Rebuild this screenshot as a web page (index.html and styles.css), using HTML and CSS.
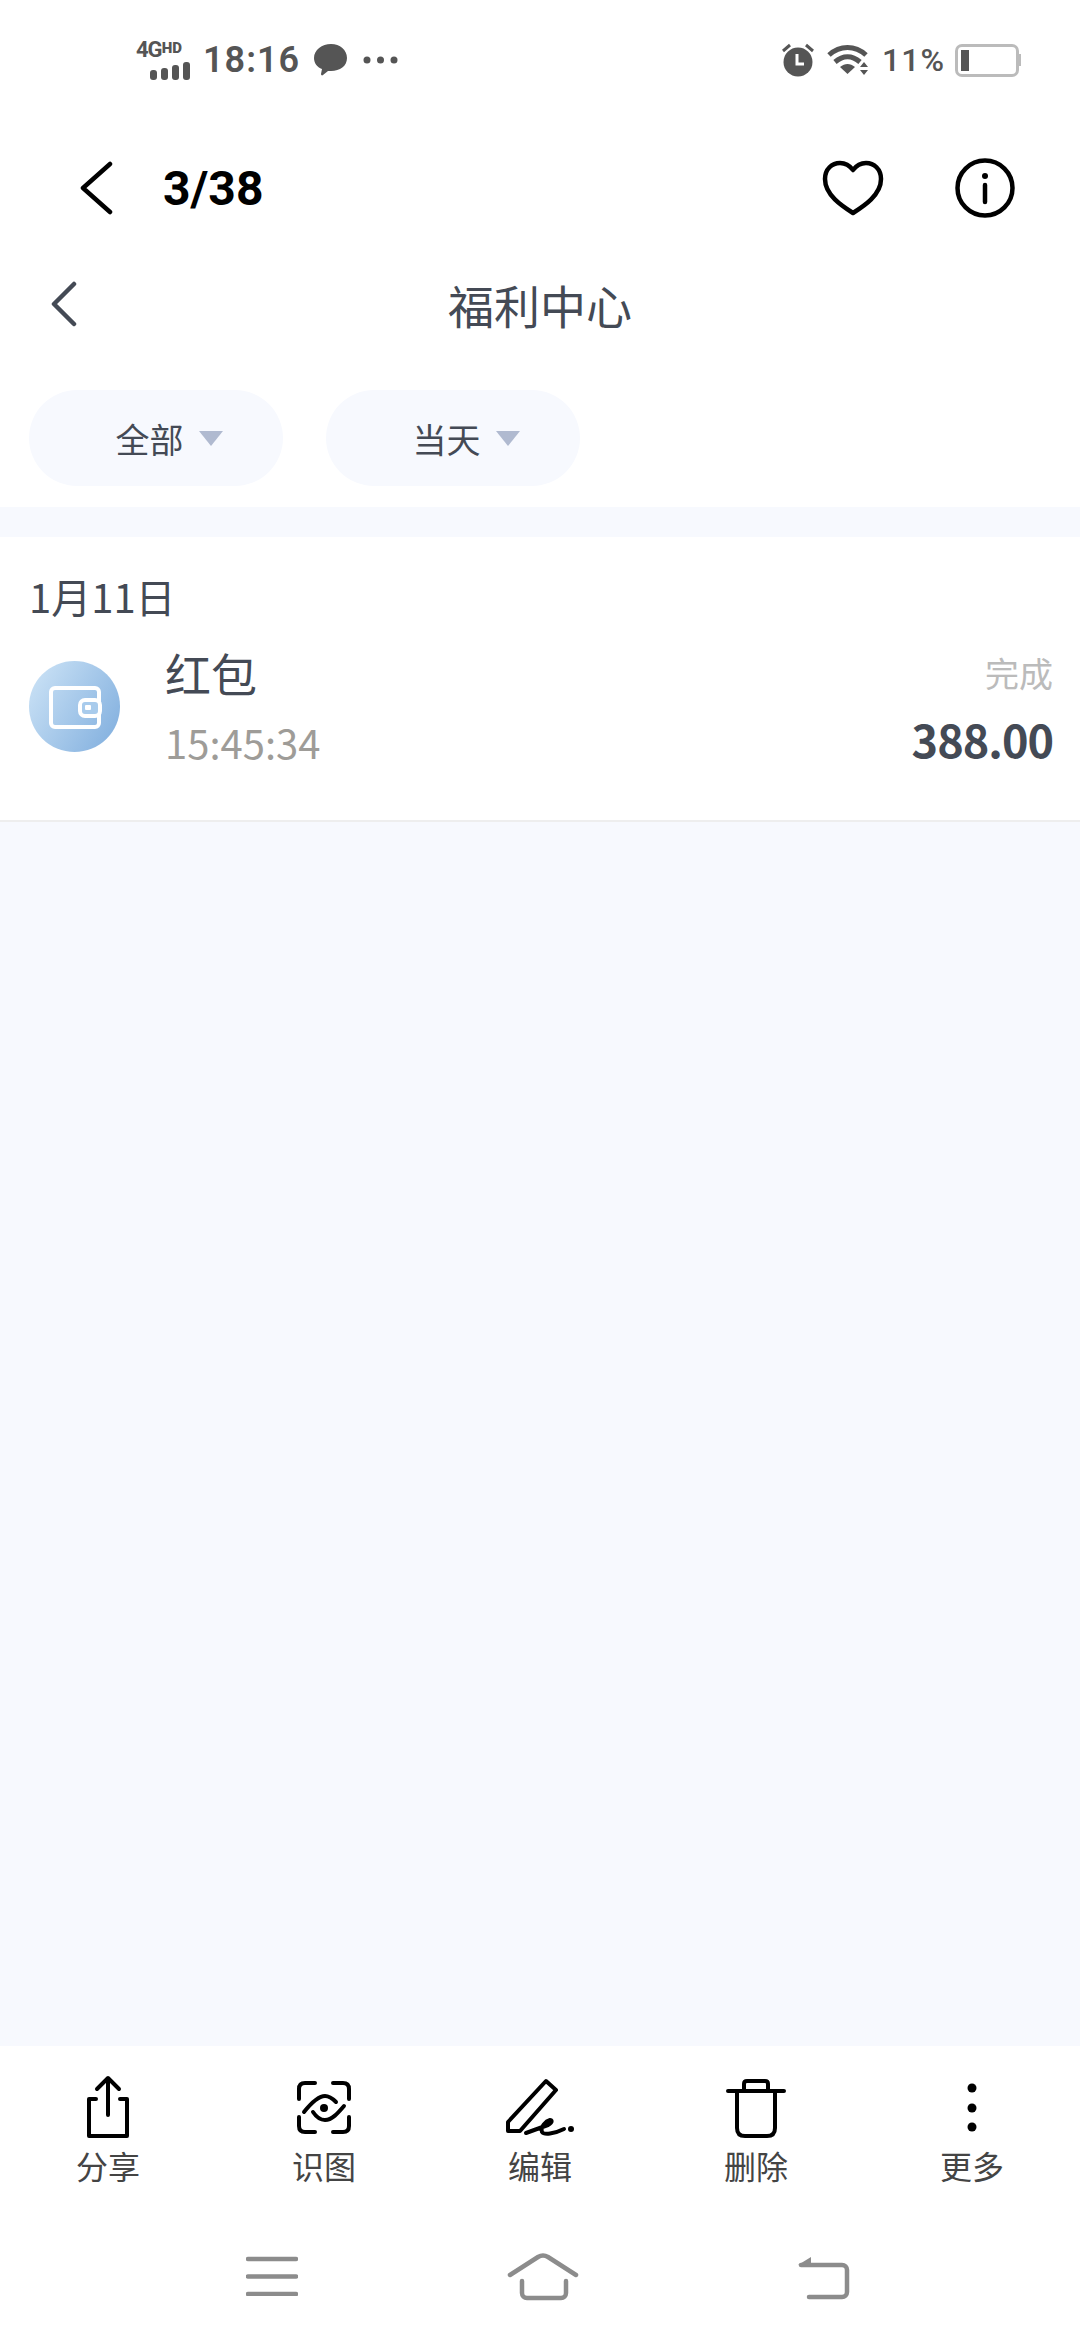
FILE: index.html
```html
<!DOCTYPE html>
<html lang="zh-CN">

<head>
    <meta charset="UTF-8">
    <meta name="viewport" content="width=device-width, initial-scale=1.0">
    <title>福利中心</title>
    <link rel="stylesheet" href="styles.css">
</head>

<body>
    <div class="page">
        <div class="status">
            <div class="status-left">
                <div class="net">
                    <div class="net-text"><span class="net-4g">4G</span><span class="net-hd">HD</span></div>
                    <svg class="net-bars" width="42" height="18" viewBox="0 0 42 18">
                        <rect x="1" y="8" width="7" height="10" rx="3" />
                        <rect x="12" y="6" width="7" height="12" rx="3" />
                        <rect x="23" y="3" width="7" height="15" rx="3" />
                        <rect x="34" y="0" width="7" height="18" rx="3" />
                    </svg>
                </div>
                <span class="clock">18:16</span>
                <svg class="bubble" width="34" height="32" viewBox="0 0 34 32">
                    <path d="M17 0C26 0 33 6 33 14C33 22 26 27 17 27C16 27 15 27 14 27L9 31C8 32 7 31 7 30L8 25C3 23 0 19 0 14C0 6 8 0 17 0Z" />
                </svg>
                <svg class="more-dots" width="35" height="8" viewBox="0 0 35 8">
                    <circle cx="4" cy="4" r="3.500" />
                    <circle cx="17.500" cy="4" r="3.500" />
                    <circle cx="31" cy="4" r="3.500" />
                </svg>
            </div>
            <div class="status-right">
                <svg class="alarm" width="34" height="34" viewBox="0 0 34 34">
                    <circle cx="17" cy="19" r="14.500" />
                    <path class="alarm-ear" d="M2 8L9 2M32 8L25 2" />
                    <path class="alarm-hand" d="M16 11V21H23" />
                </svg>
                <svg class="wifi" width="44" height="32" viewBox="0 0 44 32">
                    <path class="wifi-arc" d="M2 11C13 1 28 1 39 11M8 18C16 11 25 11 33 18" />
                    <path d="M13 23C18 19 23 19 28 23L20.500 30Z" />
                    <path d="M37 18L41 23H33ZM37 31L33 26H41Z" />
                </svg>
                <span class="battery-text">11%</span>
                <div class="battery">
                    <div class="battery-body">
                        <div class="battery-fill"></div>
                    </div>
                    <div class="battery-tip"></div>
                </div>
            </div>
        </div>

        <div class="viewer-bar">
            <svg class="viewer-back" width="34" height="54" viewBox="0 0 34 54">
                <path d="M31 3L4 27L31 51" />
            </svg>
            <span class="viewer-count">3/38</span>
            <svg class="viewer-heart" width="62" height="56" viewBox="0 0 62 56">
                <path d="M31 53C20 46 3 35 3 19C3 9 10 3 18 3C23 3 28 6 31 10C34 6 39 3 44 3C52 3 59 9 59 19C59 35 42 46 31 53Z" />
            </svg>
            <svg class="viewer-info" width="60" height="60" viewBox="0 0 60 60">
                <circle cx="30" cy="30" r="27.500" />
                <circle class="dot" cx="30" cy="18" r="3" />
                <path d="M30 27V44" />
            </svg>
        </div>

        <div class="title-bar">
            <svg class="title-back" width="28" height="46" viewBox="0 0 28 46">
                <path d="M24 3L4 23L24 43" />
            </svg>
            <span class="title">福利中心</span>
        </div>

        <div class="filters">
            <div class="chip"><span>全部</span><i class="caret"></i></div>
            <div class="chip"><span>当天</span><i class="caret"></i></div>
        </div>

        <div class="content">
            <div class="day">
                <div class="day-date">1月11日</div>
                <div class="record">
                    <svg class="record-icon" width="91" height="91" viewBox="0 0 91 91">
                        <defs>
                            <linearGradient id="coin" x1="0" y1="0" x2="1" y2="0.600">
                                <stop offset="0" stop-color="#cfe5f7" />
                                <stop offset="1" stop-color="#8ab5e1" />
                            </linearGradient>
                        </defs>
                        <circle cx="45.500" cy="45.500" r="45.500" fill="url(#coin)" />
                        <rect class="wallet" x="22" y="27" width="48" height="39" rx="4" />
                        <rect class="wallet clasp" x="51" y="39" width="20" height="16" rx="5" />
                        <rect class="wallet-dot" x="56" y="44" width="6" height="5" rx="1" />
                    </svg>
                    <div class="record-main">
                        <div class="record-name">红包</div>
                        <div class="record-time">15:45:34</div>
                    </div>
                    <div class="record-side">
                        <div class="record-state">完成</div>
                        <div class="record-amount">388.00</div>
                    </div>
                </div>
            </div>
        </div>

        <div class="tools">
            <div class="tool">
                <svg width="64" height="64" viewBox="0 0 64 64">
                    <path d="M20 24H13V61H51V24H44M32 40V4M21 14L32 3L43 14" />
                </svg>
                <span>分享</span>
            </div>
            <div class="tool">
                <svg width="64" height="64" viewBox="0 0 64 64">
                    <path d="M7 24V14Q7 8 13 8H23M41 8H51Q57 8 57 14V24M57 42V51Q57 57 51 57H41M23 57H13Q7 57 7 51V42" />
                    <path d="M12 37C20 27 27 21 33 21C38 21 41 24 44 27M21 37C25 43 29 45 33 45C40 45 46 38 52 31" />
                    <circle class="dot" cx="32" cy="33" r="4" />
                </svg>
                <span>识图</span>
            </div>
            <div class="tool">
                <svg width="72" height="64" viewBox="0 0 72 64">
                    <path d="M4 56V47L42 6L52 15L16 56Z" />
                    <path d="M22 58L44 50C49 47 48 45 46 45C42 46 36 52 38 57C40 60 50 59 60 54" />
                    <circle class="dot" cx="67" cy="54" r="3" />
                </svg>
                <span>编辑</span>
            </div>
            <div class="tool">
                <svg width="64" height="64" viewBox="0 0 64 64">
                    <path d="M4 16H60M20 16V9Q20 6 23 6H41Q44 6 44 9V16M13 16V53Q13 61 21 61H43Q51 61 51 53V16" />
                </svg>
                <span>删除</span>
            </div>
            <div class="tool">
                <svg width="64" height="64" viewBox="0 0 64 64">
                    <circle class="dot" cx="32" cy="13" r="4.500" />
                    <circle class="dot" cx="32" cy="33" r="4.500" />
                    <circle class="dot" cx="32" cy="52" r="4.500" />
                </svg>
                <span>更多</span>
            </div>
        </div>

        <div class="nav">
            <svg class="nav-menu" width="52" height="40" viewBox="0 0 52 40">
                <path d="M2 3H50M2 20.500H50M2 38H50" />
            </svg>
            <svg class="nav-home" width="72" height="48" viewBox="0 0 72 48">
                <path d="M3 22L31 4Q36 1 41 4L69 22M15 28V40A5 5 0 0 0 20 45H54A5 5 0 0 0 59 40V28" />
            </svg>
            <svg width="56" height="48" viewBox="0 0 56 48">
                <path d="M5 12H46A5 5 0 0 1 51 17V39A5 5 0 0 1 46 44H13" />
                <path class="nav-arrow" d="M2 12L15 4V13Z" />
            </svg>
        </div>
    </div>
</body>

</html>
```

FILE: styles.css
```css
* {
    padding: 0;
    margin: 0;
    box-sizing: border-box;
}

html,
body {
    height: 100%;
    width: 100%;
    background: #fff;
}

body {
    font-family: "Noto Sans CJK SC", "Noto Sans", sans-serif;
    color: #444a55;
}

svg {
    display: block;
    flex-shrink: 0;
}

.page {
    width: 1080px;
    height: 2340px;
    display: flex;
    flex-direction: column;
    overflow: hidden;
}

/* status bar */
.status {
    height: 120px;
    padding: 0 59px 0 136px;
    display: flex;
    justify-content: space-between;
    align-items: center;
    color: #555;
    font-family: Roboto, sans-serif;
    font-weight: 700;
}

.status svg {
    fill: #555;
}

.status-left,
.status-right {
    display: flex;
    align-items: center;
}

.net {
    width: 54px;
    display: flex;
    flex-direction: column;
    font-weight: 700;
}

.net-text {
    height: 20px;
    display: flex;
    align-items: flex-start;
    line-height: 20px;
}

.net-4g {
    font-size: 22px;
    letter-spacing: -1px;
}

.net-hd {
    font-size: 15px;
    line-height: 16px;
    font-weight: 900;
}

.net-bars {
    margin: 2px 0 0 13px;
}

.clock {
    margin-left: 13px;
    font-size: 36px;
    font-weight: 600;
    letter-spacing: 1px;
    line-height: 40px;
}

.bubble {
    margin-left: 14px;
}

.more-dots {
    margin-left: 15px;
}

.alarm {
    margin-right: 10px;
}

.alarm-ear {
    fill: none !important;
    stroke: #555;
    stroke-width: 3;
}

.alarm-hand {
    fill: none !important;
    stroke: #fff;
    stroke-width: 3;
}

.wifi {
    margin-left: 2px;
}

.wifi-arc {
    fill: none !important;
    stroke: #555;
    stroke-width: 5;
}

.battery-text {
    margin-left: 11px;
    font-size: 32px;
    font-weight: 500;
    letter-spacing: 1px;
}

.battery {
    margin-left: 10px;
    display: flex;
    align-items: center;
}

.battery-body {
    width: 64px;
    height: 33px;
    padding: 3px;
    border: 3px solid #bbb;
    border-radius: 7px;
}

.battery-fill {
    width: 8px;
    height: 100%;
    background: #555;
}

.battery-tip {
    width: 2px;
    height: 12px;
    background: #bbb;
}

/* top bars */
.viewer-bar {
    height: 136px;
    padding: 0 65px 0 79px;
    display: flex;
    align-items: center;
}

.viewer-bar svg,
.title-back {
    fill: none;
    stroke: #000;
    stroke-width: 4.500;
    stroke-linecap: round;
    stroke-linejoin: round;
}

.viewer-count {
    margin-left: 50px;
    font-family: Roboto, sans-serif;
    font-size: 48px;
    font-weight: 700;
    color: #000;
    flex: 1;
}

.viewer-info {
    margin-left: 71px;
}

.viewer-info .dot {
    fill: #000;
    stroke: none;
}

.title-bar {
    height: 102px;
    padding: 0 0 6px 50px;
    position: relative;
    display: flex;
    align-items: center;
}

.title-back {
    stroke: #444a55;
}

.title {
    position: absolute;
    left: 0;
    right: 0;
    text-align: center;
    font-size: 46px;
    line-height: 60px;
}

.filters {
    padding: 32px 29px 21px;
    display: flex;
    gap: 43px;
}

.chip {
    width: 254px;
    height: 96px;
    padding-left: 26px;
    border-radius: 48px;
    background: #f7f9fe;
    display: flex;
    justify-content: center;
    align-items: center;
    gap: 15px;
    font-size: 34px;
}

.caret {
    width: 0;
    height: 0;
    border-left: 12px solid transparent;
    border-right: 12px solid transparent;
    border-top: 15px solid #b0bad0;
}

/* list */
.content {
    flex: 1;
    padding-top: 30px;
    background: #f7f9fe;
}

.day {
    height: 285px;
    padding: 0 27px 0 29px;
    background: #fff;
    border-bottom: 2px solid #eee;
}

.day-date {
    padding-top: 30px;
    font-size: 40px;
    line-height: 58px;
}

.record {
    margin-top: 17px;
    display: flex;
    align-items: center;
}

.wallet {
    fill: none;
    stroke: #fff;
    stroke-width: 4;
}

.clasp {
    fill: #a8cbec;
}

.wallet-dot {
    fill: #fff;
}

.record-main {
    flex: 1;
    margin-left: 45px;
}

.record-name {
    font-size: 46px;
    line-height: 60px;
}

.record-time {
    margin-top: 12px;
    font-size: 40px;
    line-height: 56px;
    color: #9e9c98;
}

.record-side {
    padding-top: 6px;
    text-align: right;
}

.record-state {
    font-size: 34px;
    line-height: 50px;
    color: #bbb;
}

.record-amount {
    margin-top: 10px;
    font-size: 45px;
    font-weight: 700;
    letter-spacing: -1px;
    line-height: 62px;
}

/* bottom tools */
.tools {
    height: 190px;
    padding-top: 29px;
    background: #fff;
    display: flex;
}

.tool {
    width: 216px;
    display: flex;
    flex-direction: column;
    align-items: center;
    font-size: 32px;
    line-height: 46px;
    color: #444;
}

.tool svg {
    fill: none;
    stroke: #000;
    stroke-width: 4;
    stroke-linecap: round;
    stroke-linejoin: round;
}

.tool svg .dot {
    fill: #000;
    stroke: none;
}

.tool span {
    margin-top: 3px;
}

.nav {
    height: 104px;
    padding: 17px 228px 0 246px;
    background: #fff;
    display: flex;
    justify-content: space-between;
    align-items: flex-start;
}

.nav svg {
    fill: none;
    stroke: #8c8c8c;
    stroke-width: 4.500;
    stroke-linecap: round;
    stroke-linejoin: round;
}

.nav .nav-menu {
    margin-top: 3px;
}

.nav .nav-home {
    margin-right: 9px;
}

.nav .nav-arrow {
    fill: #8c8c8c;
    stroke: none;
}
```
